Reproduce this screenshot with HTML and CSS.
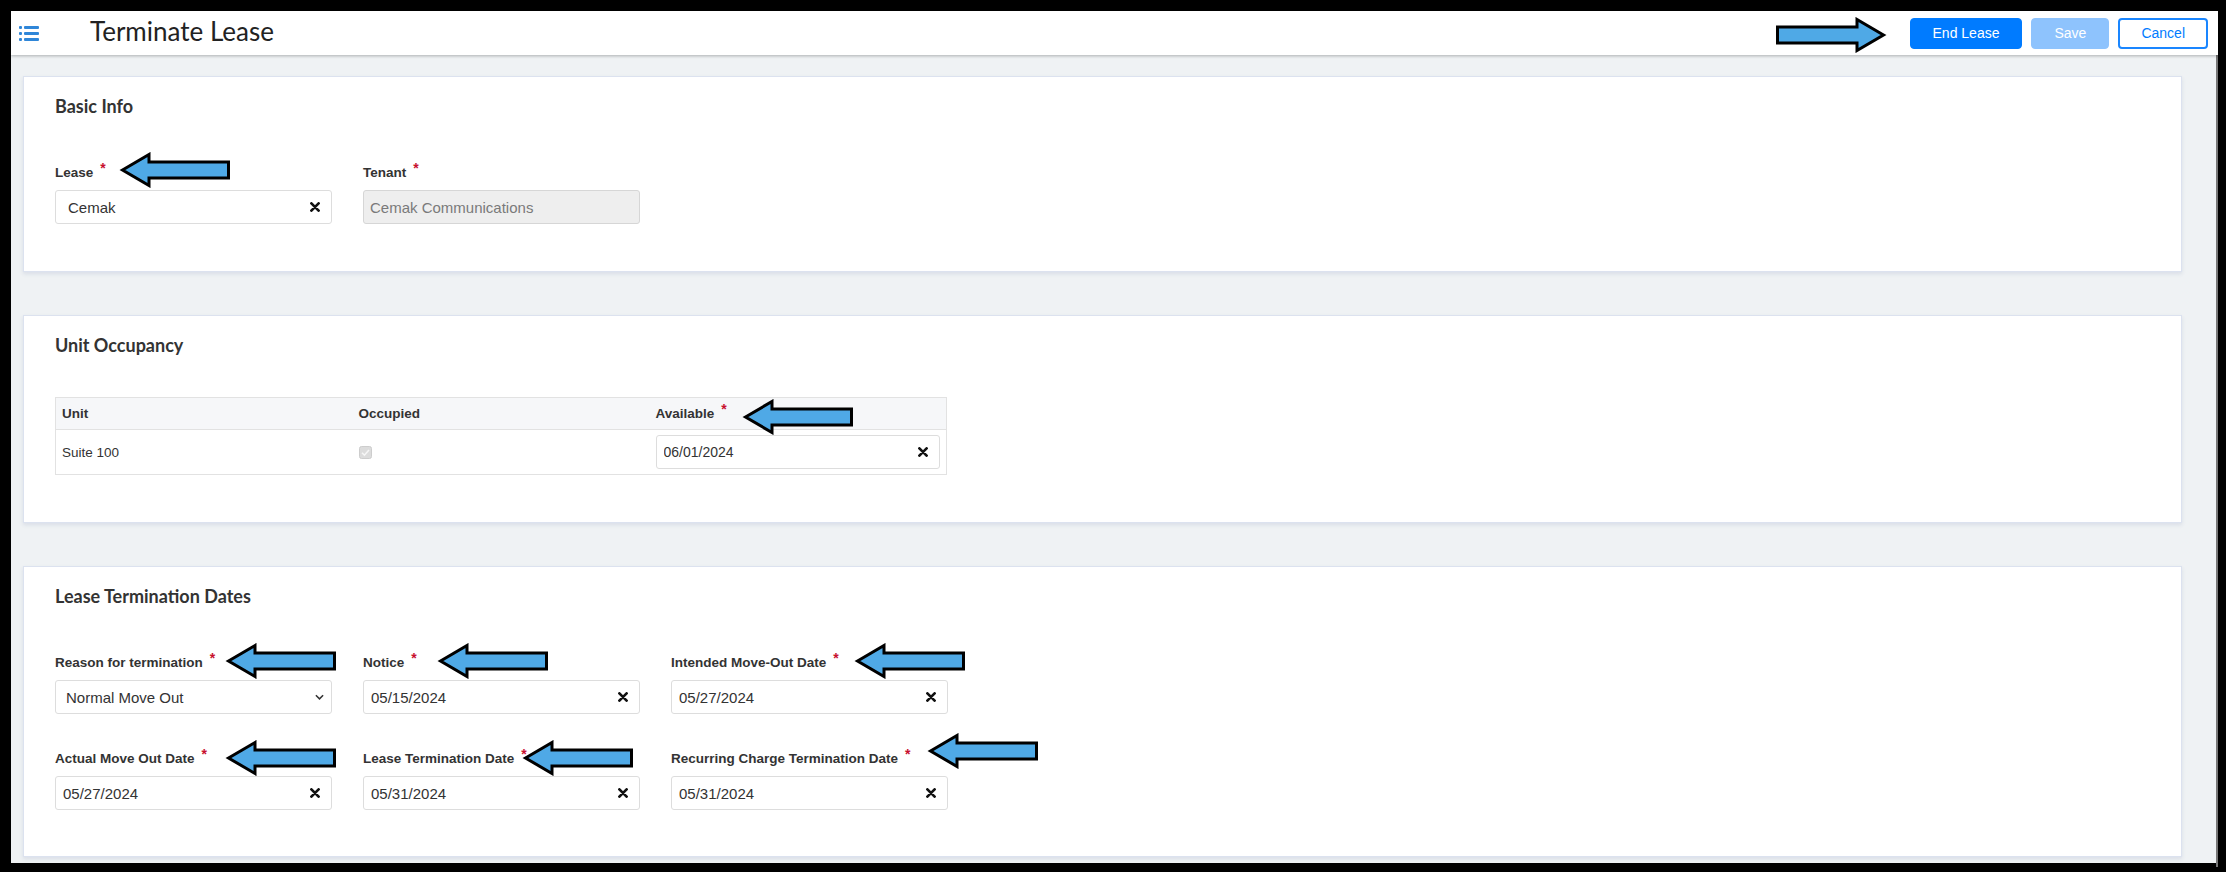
FILE: index.html
```html
<!DOCTYPE html>
<html lang="en">
<head>
<meta charset="utf-8">
<title>Terminate Lease</title>
<link rel="stylesheet" href="styles.css">
</head>
<body>
<svg class="sprite" aria-hidden="true">
  <symbol id="arrow-left" viewBox="0 0 112 36">
    <path d="M3.5 18 L30 2.5 L30 10 L109.5 10 L109.5 26 L30 26 L30 33.5 Z" fill="#4fa9e6" stroke="#000" stroke-width="3"/>
  </symbol>
  <symbol id="arrow-right" viewBox="0 0 112 36">
    <path d="M108.5 18 L82 2.5 L82 10 L2.5 10 L2.5 26 L82 26 L82 33.5 Z" fill="#4fa9e6" stroke="#000" stroke-width="3"/>
  </symbol>
  <symbol id="clear-x" viewBox="0 0 10 10">
    <path d="M1.4 1.4 L8.6 8.6 M8.6 1.4 L1.4 8.6" stroke="#111" stroke-width="2.7" stroke-linecap="round"/>
  </symbol>
</svg>

<div class="app">
  <header class="topbar">
    <div class="topbar-left">
      <svg class="menu-icon" viewBox="0 0 20 17">
        <rect x="0" y="1" width="3" height="3" rx="1"/>
        <rect x="0" y="7" width="3" height="3" rx="1"/>
        <rect x="0" y="13" width="3" height="3" rx="1"/>
        <rect x="5" y="1" width="15" height="3" rx="1"/>
        <rect x="5" y="7" width="15" height="3" rx="1"/>
        <rect x="5" y="13" width="15" height="3" rx="1"/>
      </svg>
      <h1 class="page-title">Terminate Lease</h1>
    </div>
    <div class="topbar-actions">
      <svg class="pointer-right"><use href="#arrow-right"/></svg>
      <button class="btn btn-primary" type="button">End Lease</button>
      <button class="btn btn-primary" type="button" disabled>Save</button>
      <button class="btn btn-outline" type="button">Cancel</button>
    </div>
  </header>

  <main class="content">
    <section class="card">
      <h2 class="card-title">Basic Info</h2>
      <div class="form-grid">
        <div class="field">
          <label class="field-label">Lease<span class="req">*</span></label>
          <div class="control control--lookup">
            <input type="text" value="Cemak">
            <svg class="clear-icon"><use href="#clear-x"/></svg>
          </div>
          <svg class="callout callout--lease"><use href="#arrow-left"/></svg>
        </div>
        <div class="field">
          <label class="field-label">Tenant<span class="req">*</span></label>
          <div class="control control--disabled">
            <input type="text" value="Cemak Communications" disabled>
          </div>
        </div>
      </div>
    </section>

    <section class="card">
      <h2 class="card-title card-title--table">Unit Occupancy</h2>
      <table class="unit-table">
        <thead>
          <tr>
            <th>Unit</th>
            <th>Occupied</th>
            <th>
              <span class="th-label">Available<span class="req">*</span>
                <svg class="callout callout--available"><use href="#arrow-left"/></svg>
              </span>
            </th>
          </tr>
        </thead>
        <tbody>
          <tr>
            <td>Suite 100</td>
            <td>
              <svg class="checkbox" viewBox="0 0 13 13">
                <rect x="0.5" y="0.5" width="12" height="12" rx="2" fill="#dcdcdc" stroke="#cdcdcd"/>
                <path d="M3 6.8 L5.4 9.2 L10 3.9" fill="none" stroke="#f6f6f6" stroke-width="1.6"/>
              </svg>
            </td>
            <td>
              <div class="control control--cell">
                <input type="text" value="06/01/2024">
                <svg class="clear-icon"><use href="#clear-x"/></svg>
              </div>
            </td>
          </tr>
        </tbody>
      </table>
    </section>

    <section class="card card--dates">
      <h2 class="card-title">Lease Termination Dates</h2>
      <div class="form-grid">
        <div class="field">
          <label class="field-label">Reason for termination<span class="req">*</span></label>
          <div class="control control--select">
            <select class="select"><option>Normal Move Out</option></select>
            <svg class="chevron" viewBox="0 0 10 6"><path d="M1 1 L5 5 L9 1" fill="none" stroke="#333" stroke-width="1.7"/></svg>
          </div>
          <svg class="callout callout--reason"><use href="#arrow-left"/></svg>
        </div>
        <div class="field">
          <label class="field-label">Notice<span class="req">*</span></label>
          <div class="control">
            <input type="text" value="05/15/2024">
            <svg class="clear-icon"><use href="#clear-x"/></svg>
          </div>
          <svg class="callout callout--notice"><use href="#arrow-left"/></svg>
        </div>
        <div class="field">
          <label class="field-label">Intended Move-Out Date<span class="req">*</span></label>
          <div class="control">
            <input type="text" value="05/27/2024">
            <svg class="clear-icon"><use href="#clear-x"/></svg>
          </div>
          <svg class="callout callout--intended"><use href="#arrow-left"/></svg>
        </div>
        <div class="field">
          <label class="field-label">Actual Move Out Date<span class="req">*</span></label>
          <div class="control">
            <input type="text" value="05/27/2024">
            <svg class="clear-icon"><use href="#clear-x"/></svg>
          </div>
          <svg class="callout callout--actual"><use href="#arrow-left"/></svg>
        </div>
        <div class="field">
          <label class="field-label">Lease Termination Date<span class="req">*</span></label>
          <div class="control">
            <input type="text" value="05/31/2024">
            <svg class="clear-icon"><use href="#clear-x"/></svg>
          </div>
          <svg class="callout callout--termination"><use href="#arrow-left"/></svg>
        </div>
        <div class="field">
          <label class="field-label">Recurring Charge Termination Date<span class="req">*</span></label>
          <div class="control">
            <input type="text" value="05/31/2024">
            <svg class="clear-icon"><use href="#clear-x"/></svg>
          </div>
          <svg class="callout callout--recurring"><use href="#arrow-left"/></svg>
        </div>
      </div>
    </section>
  </main>
</div>
</body>
</html>
```
FILE: styles.css
```css
* {
  box-sizing: border-box;
}

html,
body {
  margin: 0;
}

body {
  background: #000;
  padding: 11px 8px 9px 11px;
  font-family: "Liberation Sans", Arial, sans-serif;
  color: #333;
}

.sprite {
  position: absolute;
  width: 0;
  height: 0;
  overflow: hidden;
}

.app {
  height: 852px;
  display: flex;
  flex-direction: column;
  background: #eff2f4;
}

/* ---------- top bar ---------- */
.topbar {
  flex: none;
  height: 44px;
  display: flex;
  align-items: center;
  justify-content: space-between;
  padding: 0 10px 0 8px;
  background: #fff;
  box-shadow: 0 1px 3px rgba(0, 0, 0, 0.28);
  position: relative;
  z-index: 1;
}

.topbar-left {
  display: flex;
  align-items: center;
}

.menu-icon {
  width: 20px;
  height: 17px;
  fill: #2f86d8;
  margin-right: 51px;
}

.page-title {
  margin: 0 0 5px;
  font-family: Lato, "Liberation Sans", sans-serif;
  font-weight: 400;
  font-size: 26px;
  line-height: 30px;
  color: #222;
}

.topbar-actions {
  display: flex;
  align-items: center;
  gap: 9px;
}

.pointer-right {
  width: 112px;
  height: 36px;
  margin-right: 14px;
  margin-top: 4px;
}

.btn {
  height: 31px;
  padding: 0 22px;
  border: 1px solid transparent;
  border-radius: 4px;
  font-family: "Liberation Sans", Arial, sans-serif;
  font-size: 14px;
  line-height: 1;
}

.btn-primary {
  background: #007bff;
  border-color: #007bff;
  color: #fff;
}

.btn-primary:disabled {
  background: #8ec3fd;
  border-color: #8ec3fd;
  color: #fff;
}

.btn-outline {
  background: #fff;
  border: 2px solid #1a86ff;
  color: #007bff;
  padding: 0 21px;
}

/* ---------- content ---------- */
.content {
  flex: 1;
  display: flex;
  flex-direction: column;
  gap: 43px;
  padding: 21px 34px 10px 12px;
  border-right: 2px solid #767676;
}

.card {
  flex: none;
  background: #fff;
  border: 1px solid #dce2ef;
  box-shadow: 0 2px 4px rgba(60, 80, 140, 0.12);
  padding: 17px 32px 47px 31px;
}

.card--dates {
  padding-bottom: 46px;
}

.card-title {
  margin: 0 0 45px;
  font-family: Lato, "Liberation Sans", sans-serif;
  font-weight: 700;
  font-size: 18px;
  line-height: 24px;
  color: #333;
}

.card-title--table {
  margin-bottom: 40px;
}

.form-grid {
  display: grid;
  grid-template-columns: repeat(3, 277px);
  column-gap: 31px;
  row-gap: 35px;
}

.field {
  position: relative;
}

.field-label {
  display: block;
  margin-bottom: 8px;
  font-size: 13.5px;
  font-weight: 700;
  line-height: 18px;
  color: #333;
  white-space: nowrap;
}

.req {
  position: relative;
  top: -4px;
  margin-left: 7px;
  color: #c8102e;
  font-size: 14px;
  font-weight: 700;
}

/* ---------- inputs ---------- */
.control {
  position: relative;
  display: flex;
  align-items: center;
  height: 34px;
  padding: 0 11px 0 7px;
  background: #fff;
  border: 1px solid #dddddd;
  border-radius: 3px;
}

.control input,
.control .select {
  flex: 1;
  min-width: 0;
  padding: 0;
  border: 0;
  outline: 0;
  background: transparent;
  font-family: "Liberation Sans", Arial, sans-serif;
  font-size: 15px;
  color: #333;
}

.control--lookup {
  padding-left: 12px;
}

.control--disabled {
  background: #eeeeee;
  border-color: #d6d6d6;
  padding-left: 6px;
}

.control--disabled input {
  color: #7a7a7a;
}

.control--select {
  padding-right: 7px;
}

.control .select {
  appearance: none;
  -webkit-appearance: none;
  padding-left: 3px;
}

.control--cell input {
  font-size: 14px;
}

.clear-icon {
  flex: none;
  width: 10px;
  height: 10px;
}

.chevron {
  flex: none;
  width: 9px;
  height: 6px;
}

/* ---------- table ---------- */
.unit-table {
  width: 892px;
  table-layout: fixed;
  border-collapse: collapse;
  border: 1px solid #e2e2e2;
  font-size: 13.5px;
}

.unit-table th {
  height: 32px;
  padding: 0 6px;
  background: #f6f7f9;
  border-bottom: 1px solid #e2e2e2;
  text-align: left;
  font-weight: 700;
  color: #333;
}

.unit-table td {
  height: 45px;
  padding: 0 6px;
  color: #333;
}

.th-label {
  position: relative;
  display: inline-block;
  line-height: 18px;
}

.checkbox {
  display: block;
  width: 13px;
  height: 13px;
}

/* ---------- annotation arrows ---------- */
.callout {
  position: absolute;
  width: 112px;
  height: 36px;
  pointer-events: none;
}

.callout--lease { left: 64px; top: -11px; }
.callout--available { left: 86px; top: -5px; }
.callout--reason { left: 170px; top: -10px; }
.callout--notice { left: 74px; top: -10px; }
.callout--intended { left: 183px; top: -10px; }
.callout--actual { left: 170px; top: -9px; }
.callout--termination { left: 159px; top: -9px; }
.callout--recurring { left: 256px; top: -16px; }
```
